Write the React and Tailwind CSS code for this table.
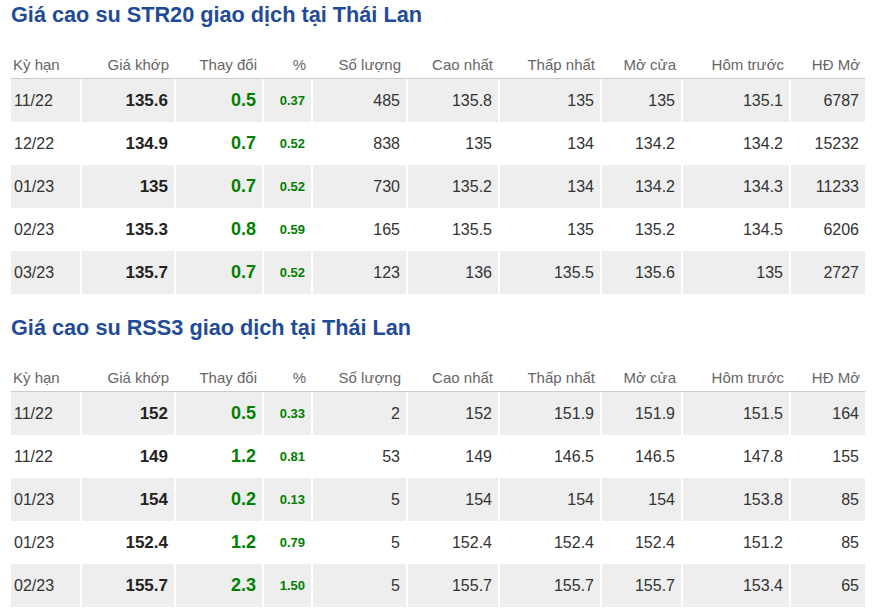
import React from 'react';

// ── Data ──────────────────────────────────────────────────────────────────────
const HEADERS = ['Kỳ hạn', 'Giá khớp', 'Thay đổi', '%', 'Số lượng', 'Cao nhất', 'Thấp nhất', 'Mở cửa', 'Hôm trước', 'HĐ Mở'];
const WIDTHS = ['w-[69px]', 'w-[94px]', 'w-[88px]', 'w-[49px]', 'w-[95px]', 'w-[92px]', 'w-[102px]', 'w-[81px]', 'w-[108px]', 'w-[76px]'];

const STR20 = [
  ['11/22', '135.6', '0.5', '0.37', '485', '135.8', '135', '135', '135.1', '6787'],
  ['12/22', '134.9', '0.7', '0.52', '838', '135', '134', '134.2', '134.2', '15232'],
  ['01/23', '135', '0.7', '0.52', '730', '135.2', '134', '134.2', '134.3', '11233'],
  ['02/23', '135.3', '0.8', '0.59', '165', '135.5', '135', '135.2', '134.5', '6206'],
  ['03/23', '135.7', '0.7', '0.52', '123', '136', '135.5', '135.6', '135', '2727'],
];

const RSS3 = [
  ['11/22', '152', '0.5', '0.33', '2', '152', '151.9', '151.9', '151.5', '164'],
  ['11/22', '149', '1.2', '0.81', '53', '149', '146.5', '146.5', '147.8', '155'],
  ['01/23', '154', '0.2', '0.13', '5', '154', '154', '154', '153.8', '85'],
  ['01/23', '152.4', '1.2', '0.79', '5', '152.4', '152.4', '152.4', '151.2', '85'],
  ['02/23', '155.7', '2.3', '1.50', '5', '155.7', '155.7', '155.7', '153.4', '65'],
];

// ── Cell styling ──────────────────────────────────────────────────────────────
function cellText(i) {
  if (i === 1) return 'text-[17px] font-bold text-[#222]';
  if (i === 2) return 'text-[18px] font-bold text-[#008000]';
  if (i === 3) return 'text-[13px] font-bold text-[#008000]';
  return 'text-[16px] text-[#333]';
}

function PriceTable({ title, rows, className }) {
  return (
    <section className={className}>
      <h2 className="h-[30px] text-[21.7px] leading-[30px] font-bold text-[#1f4b98]">{title}</h2>
      <table className="mt-[20px] border-separate border-spacing-0 table-fixed">
        <thead>
          <tr className="h-[29px]">
            {HEADERS.map((h, i) => (
              <th
                key={h}
                className={`${WIDTHS[i]} border-b border-[#cccccc] pt-[2px] text-[15px] font-normal text-[#666] ${
                  i === 0 ? 'text-left pl-[2px]' : 'text-right pr-[5px]'
                }`}
              >
                {h}
              </th>
            ))}
          </tr>
        </thead>
        <tbody>
          {rows.map((r, ri) => (
            <tr key={ri} className={`h-[43px] ${ri % 2 === 0 ? 'bg-[#eeeeee]' : 'bg-white'}`}>
              {r.map((v, i) => (
                <td
                  key={i}
                  className={`${cellText(i)} ${
                    i === 0 ? 'text-left pl-[3px]' : 'text-right pr-[6px] border-l-2 border-white'
                  }`}
                >
                  {v}
                </td>
              ))}
            </tr>
          ))}
        </tbody>
      </table>
    </section>
  );
}

// ── Root ──────────────────────────────────────────────────────────────────────
export default function App() {
  return (
    <div className="min-h-screen bg-white pl-[11px] font-['Liberation_Sans',Arial,sans-serif]">
      <PriceTable title="Giá cao su STR20 giao dịch tại Thái Lan" rows={STR20} className="pb-[19px]" />
      <PriceTable title="Giá cao su RSS3 giao dịch tại Thái Lan" rows={RSS3} />
    </div>
  );
}
